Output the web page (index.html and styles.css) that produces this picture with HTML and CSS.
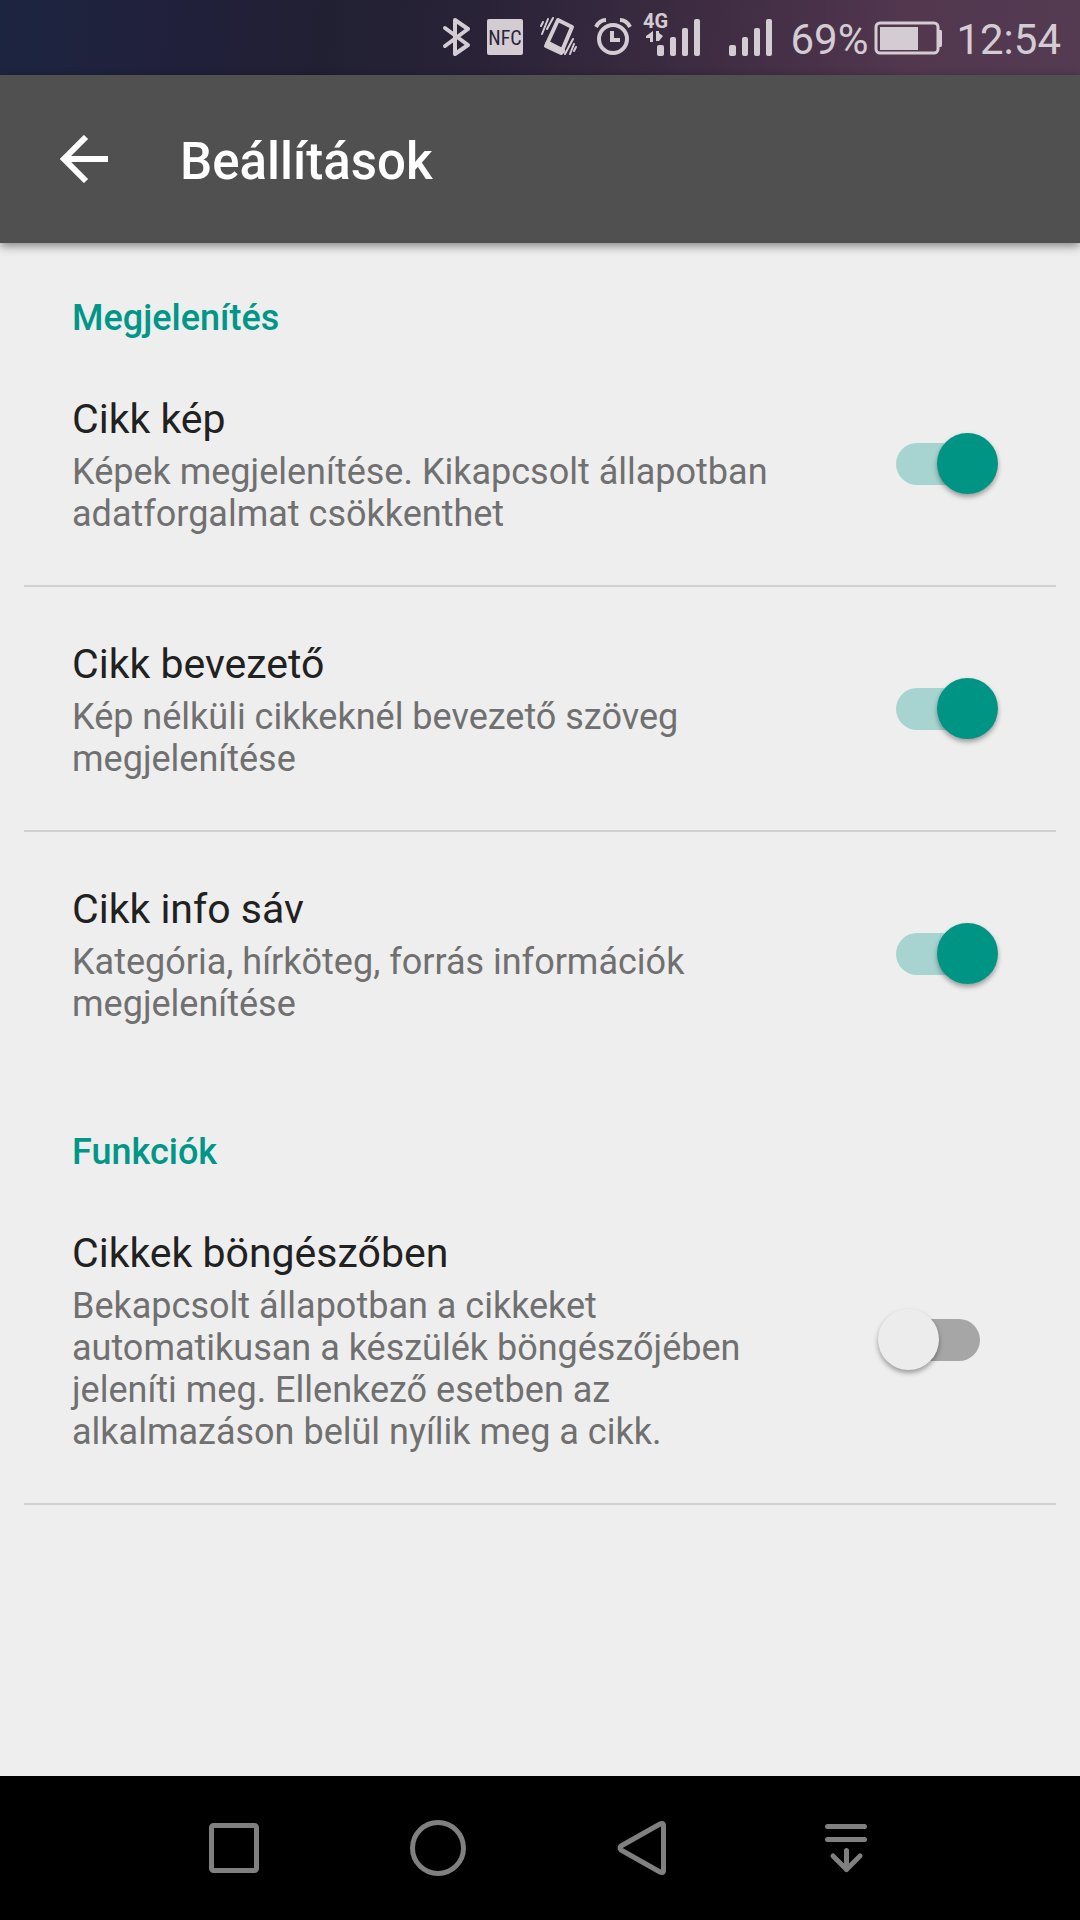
FILE: index.html
```html
<!DOCTYPE html>
<html lang="hu">
<head>
<meta charset="utf-8">
<meta name="viewport" content="width=device-width, initial-scale=1">
<title>Beállítások</title>
<link rel="stylesheet" href="styles.css">
</head>
<body>
<div class="screen">
  <div class="status-bar">
    <svg class="status-icon" width="36" height="75" viewBox="0 0 36 75" fill="none" stroke="currentColor" stroke-width="4" stroke-linejoin="round" stroke-linecap="round" aria-hidden="true">
      <path d="M5 28 28 45 15 54V20L28 29 5 46"/>
    </svg>
    <svg class="status-icon" width="40" height="75" viewBox="0 0 40 75" aria-hidden="true">
      <rect x="1" y="19" width="36" height="36" rx="2" fill="currentColor"/>
      <text class="nfc-text" x="19" y="45" text-anchor="middle">NFC</text>
    </svg>
    <svg class="status-icon" width="47" height="75" viewBox="0 0 47 75" fill="none" stroke="currentColor" stroke-linecap="round" aria-hidden="true">
      <path d="M22 20 36 27 25 53 10 46Z" stroke-width="4" stroke-linejoin="round"/>
      <path d="M12 44 26 51" stroke-width="6"/>
      <path d="M7 22 5 26M12 19 6 34M17 18 11 29M37 39 29 54M38 44 34 54M40 47 38 51" stroke-width="2"/>
    </svg>
    <svg class="status-icon" width="40" height="75" viewBox="0 0 40 75" fill="none" stroke="currentColor" stroke-width="4" aria-hidden="true">
      <circle cx="20" cy="39" r="14"/>
      <path d="M19 31V40H27"/>
      <path d="M3 27C5 23 9 20 13 20M37 27C35 23 31 20 27 20"/>
    </svg>
    <svg class="status-icon" width="68" height="75" viewBox="0 0 68 75" fill="currentColor" aria-hidden="true">
      <text class="network-text" x="0" y="28">4G</text>
      <path d="M10 31V42H7V38H3V36ZM13 31H16V33L20 36 16 41H13Z"/>
      <rect x="14" y="45" width="7" height="11" rx="2"/>
      <rect x="27" y="37" width="6" height="19" rx="2"/>
      <rect x="39" y="28" width="6" height="28" rx="2"/>
      <rect x="51" y="19" width="6" height="37" rx="2"/>
    </svg>
    <svg class="status-icon" width="59" height="75" viewBox="0 0 59 75" fill="currentColor" aria-hidden="true">
      <rect x="8" y="45" width="7" height="11" rx="2"/>
      <rect x="21" y="37" width="6" height="19" rx="2"/>
      <rect x="33" y="28" width="6" height="28" rx="2"/>
      <rect x="45" y="19" width="6" height="37" rx="2"/>
    </svg>
    <span class="battery">
      <span class="status-text">69%</span>
      <svg class="status-icon" width="72" height="75" viewBox="0 0 72 75" aria-hidden="true">
        <rect x="2" y="23" width="62" height="30" rx="4" fill="none" stroke="currentColor" stroke-width="3"/>
        <path d="M6 27H44V50H6ZM65 30H67Q68 30 68 32V45Q68 47 67 47H65Z" fill="currentColor"/>
      </svg>
    </span>
    <time class="status-text" datetime="12:54">12:54</time>
  </div>

  <header class="app-bar">
    <button class="back-button" type="button" aria-label="Vissza">
      <svg width="48" height="48" viewBox="0 0 48 48" fill="none" stroke="currentColor" stroke-width="6" aria-hidden="true">
        <path d="M48 24H6M26 2 4 24 26 46"/>
      </svg>
    </button>
    <h1 class="app-title">Beállítások</h1>
  </header>

  <main class="settings">
    <section class="group">
      <h2 class="group-title">Megjelenítés</h2>
      <div class="row">
        <label class="row-text" for="cikk-kep">
          <span class="row-title">Cikk kép</span>
          <span class="row-summary">Képek megjelenítése. Kikapcsolt állapotban adatforgalmat csökkenthet</span>
        </label>
        <input class="switch" type="checkbox" role="switch" id="cikk-kep" checked>
      </div>
      <div class="row">
        <label class="row-text" for="cikk-bevezeto">
          <span class="row-title">Cikk bevezető</span>
          <span class="row-summary">Kép nélküli cikkeknél bevezető szöveg megjelenítése</span>
        </label>
        <input class="switch" type="checkbox" role="switch" id="cikk-bevezeto" checked>
      </div>
      <div class="row row-plain">
        <label class="row-text" for="cikk-info">
          <span class="row-title">Cikk info sáv</span>
          <span class="row-summary">Kategória, hírköteg, forrás információk megjelenítése</span>
        </label>
        <input class="switch" type="checkbox" role="switch" id="cikk-info" checked>
      </div>
    </section>
    <section class="group">
      <h2 class="group-title">Funkciók</h2>
      <div class="row">
        <label class="row-text" for="bongeszo">
          <span class="row-title">Cikkek böngészőben</span>
          <span class="row-summary">Bekapcsolt állapotban a cikkeket automatikusan a készülék böngészőjében jeleníti meg. Ellenkező esetben az alkalmazáson belül nyílik meg a cikk.</span>
        </label>
        <input class="switch" type="checkbox" role="switch" id="bongeszo">
      </div>
    </section>
  </main>

  <nav class="nav-bar" aria-label="Navigáció">
    <button class="nav-button" type="button" aria-label="Legutóbbiak">
      <svg width="60" height="60" viewBox="0 0 60 60" fill="none" stroke="currentColor" stroke-width="5" aria-hidden="true">
        <rect x="7.500" y="7.500" width="45" height="45" rx="2"/>
      </svg>
    </button>
    <button class="nav-button" type="button" aria-label="Kezdőlap">
      <svg width="60" height="60" viewBox="0 0 60 60" fill="none" stroke="currentColor" stroke-width="5" aria-hidden="true">
        <circle cx="30" cy="30" r="25.500"/>
      </svg>
    </button>
    <button class="nav-button" type="button" aria-label="Vissza">
      <svg width="60" height="60" viewBox="0 0 60 60" fill="none" stroke="currentColor" stroke-width="5" stroke-linejoin="round" aria-hidden="true">
        <path d="M48 6Q51 4.500 51.500 7V53Q51 55.500 48 54L9 32Q7 30 9 28Z"/>
      </svg>
    </button>
    <button class="nav-button" type="button" aria-label="Értesítések">
      <svg width="60" height="60" viewBox="0 0 60 60" fill="none" stroke="currentColor" stroke-width="5" stroke-linecap="round" stroke-linejoin="round" aria-hidden="true">
        <path d="M11.500 8.500H48.500M11.500 21.500H48.500M30.500 32.500V51.500M17 38 30.500 51.500 44 38"/>
      </svg>
    </button>
  </nav>
</div>
</body>
</html>
```
FILE: styles.css
```css
*,
*::before {
  box-sizing: border-box;
}

body {
  margin: 0;
  background: #eeeeee;
  color: #212121;
  font-family: Roboto, "Noto Sans", sans-serif;
}

h1,
h2 {
  margin: 0;
  font-weight: 500;
}

button {
  padding: 0;
  border: 0;
  background: none;
  color: inherit;
}

svg {
  display: block;
}

.screen {
  display: flex;
  flex-direction: column;
  min-height: 100vh;
}

/* Status bar */

.status-bar {
  display: flex;
  align-items: center;
  justify-content: flex-end;
  gap: 10px;
  height: 75px;
  padding-right: 19px;
  background: linear-gradient(95deg, #1c2540 0%, #21203c 16%, #212033 30%, #2a2338 45%, #3e2c42 65%, #52374f 84%, #543b52 100%);
  color: #d3ccd3;
  font-size: 42px;
  line-height: 50px;
}

.status-icon {
  flex: none;
}

.status-text {
  padding-top: 4px;
}

.nfc-text {
  fill: #292438;
  font-family: "Roboto Condensed", "Liberation Sans Narrow", Roboto, sans-serif;
  font-size: 20px;
}

.network-text {
  font-size: 20px;
  font-weight: 700;
}

.battery {
  display: flex;
  align-items: center;
  gap: 6px;
}

/* App bar */

.app-bar {
  display: flex;
  align-items: center;
  gap: 72px;
  height: 168px;
  padding: 0 60px;
  background: #505050;
  box-shadow: 0 3px 9px rgba(0, 0, 0, 0.45);
  color: #ffffff;
}

.app-title {
  padding-top: 6px;
  font-size: 51px;
  line-height: 60px;
}

/* Settings list */

.settings {
  flex: 1;
}

.group-title {
  padding: 54px 72px 3px;
  color: #009688;
  font-size: 36px;
  line-height: 42px;
}

.row {
  display: flex;
  align-items: center;
  gap: 40px;
  margin: 0 24px;
  padding: 53px 58px 50px 48px;
  border-bottom: 2px solid #d0d0d0;
}

.row-plain {
  padding-bottom: 52px;
  border-bottom: 0;
}

.row-text {
  display: flex;
  flex: 1;
  flex-direction: column;
  gap: 8px;
}

.row-title {
  font-size: 41px;
  line-height: 48px;
}

.row-summary {
  color: #707070;
  font-size: 36px;
  line-height: 42px;
}

.switch {
  position: relative;
  display: flex;
  flex: none;
  align-items: center;
  width: 120px;
  height: 61px;
  margin: 0 0 3px;
  appearance: none;
}

.switch::before {
  content: "";
  width: 84px;
  height: 42px;
  margin-left: 18px;
  border-radius: 21px;
  background: #a6a6a6;
}

.switch::after {
  content: "";
  position: absolute;
  top: 0;
  left: 0;
  width: 61px;
  height: 61px;
  border-radius: 50%;
  background: #ececec;
  box-shadow: 0 3px 5px rgba(0, 0, 0, 0.35);
}

.switch:checked::before {
  background: #a7d4d0;
}

.switch:checked::after {
  right: 0;
  left: auto;
  background: #009485;
}

/* System navigation */

.nav-bar {
  display: flex;
  justify-content: center;
  gap: 144px;
  height: 144px;
  background: #000000;
  color: #808080;
}

.nav-button {
  display: flex;
  align-items: center;
}
```
